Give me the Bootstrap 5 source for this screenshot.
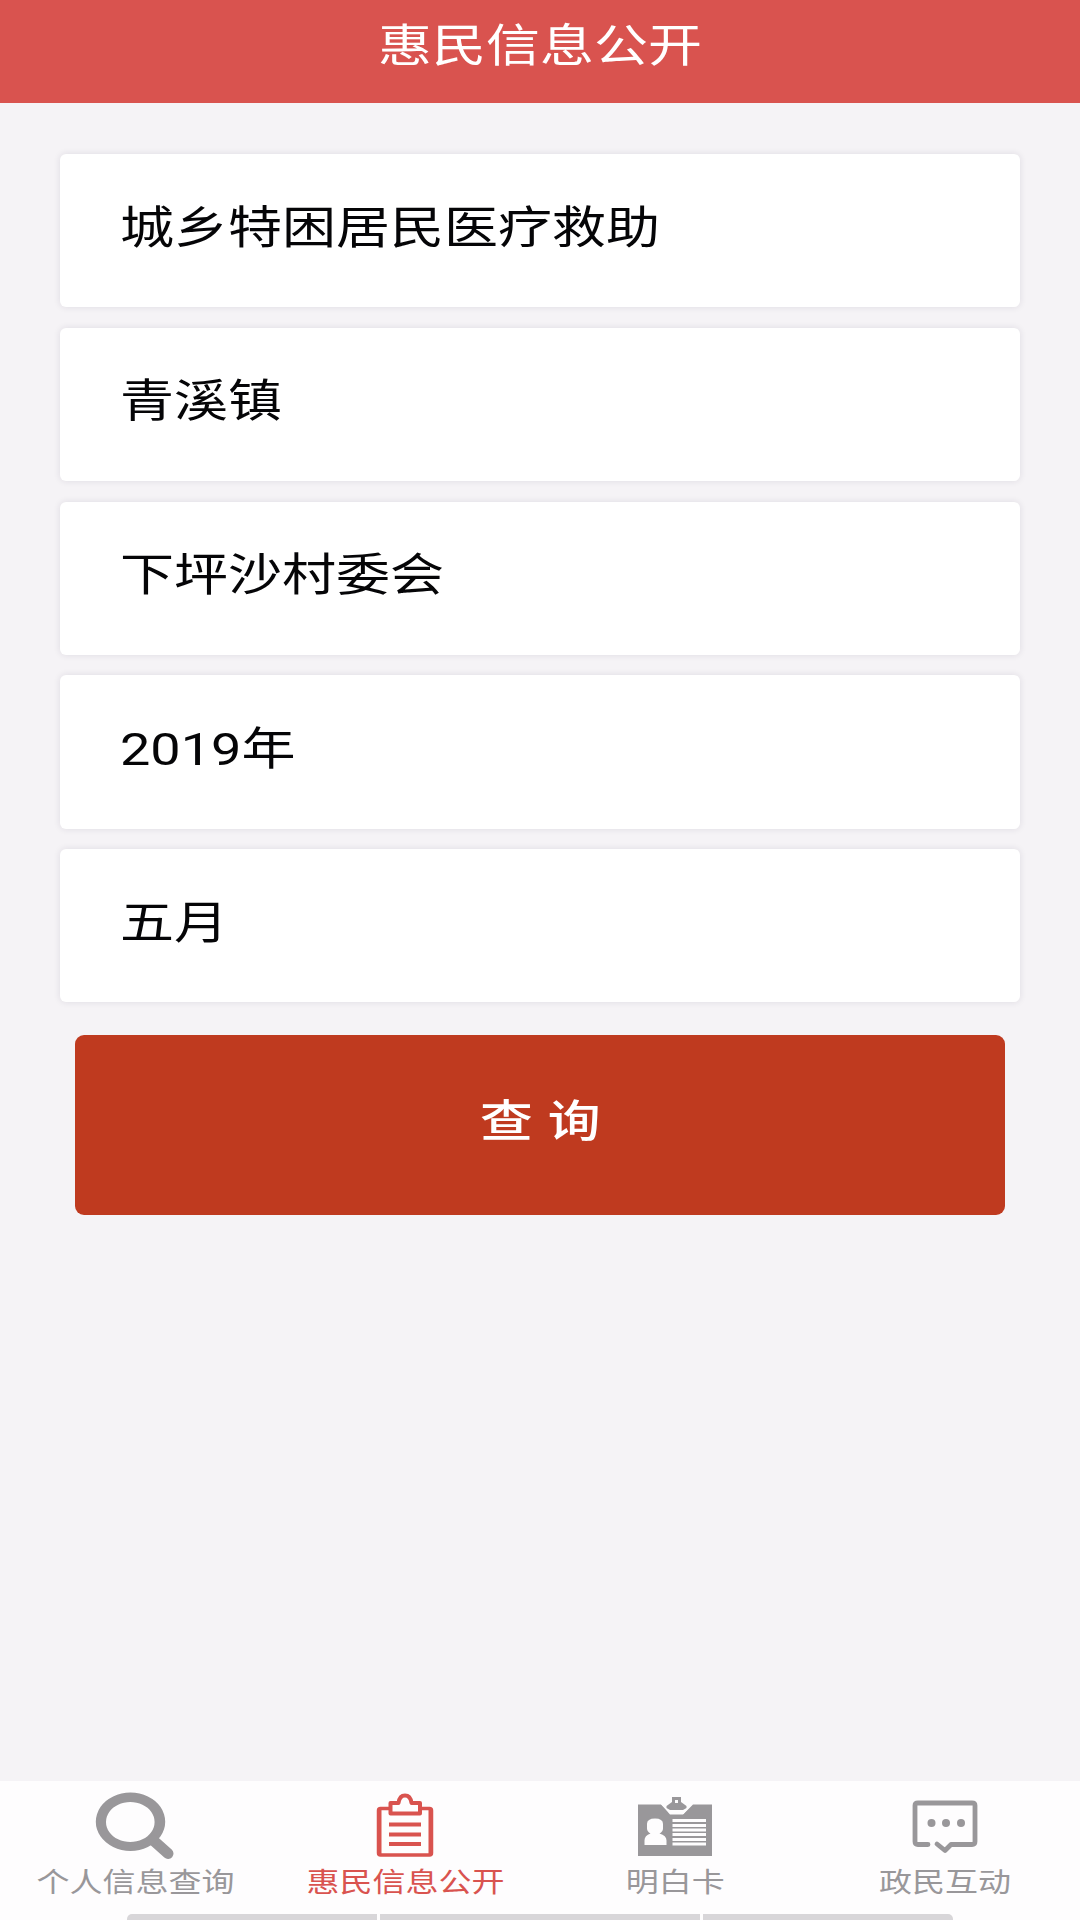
<!DOCTYPE html>
<html lang="zh-CN">
<head>
<meta charset="utf-8">
<meta name="viewport" content="width=device-width, initial-scale=1">
<title>惠民信息公开</title>
<link href="https://cdn.jsdelivr.net/npm/bootstrap@5.3.0/dist/css/bootstrap.min.css" rel="stylesheet">
<style>
  body { background: #f5f3f6; font-family: Roboto, "Noto Sans CJK SC", sans-serif; color: #050507; }
  .app { height: 1920px; }
  .wide { display: inline-block; transform: scaleX(1.2); white-space: nowrap; line-height: 1; }
  .topbar { height: 103px; background: #d9534f; padding-bottom: 10px; font-size: 45px; }
  .query { padding: 51px 60px 0; }
  .fields { gap: 20.6px; }
  .field { height: 153.2px; border-radius: 6px; padding: 0 0 5px 60px; font-size: 45px; box-shadow: 0 0 7px rgba(40,30,60,.11); }
  .field .wide { transform-origin: left center; }
  .btn-query { --bs-btn-bg: #bf3a1f; --bs-btn-color: #fff; --bs-btn-hover-bg: #a9331b; --bs-btn-hover-color: #fff;
    height: 180px; margin: 33px 15px 0; border: 0; border-radius: 9px; padding: 0 0 7px; font-size: 44px; font-weight: 500; word-spacing: 1.5px; }
  .tabs { height: 139px; background: #fefdfe; }
  .tab { height: 133px; color: #99979a; font-size: 27.5px; text-decoration: none; }
  .tab.active { color: #d9534f; }
  .tab svg { width: 90px; height: 80px; margin-top: 8px; flex: none; }
  .strip { height: 6px; gap: 3px; padding: 0 127px; }
  .strip span { background: #d8d6d9; }
  .strip .edge { flex: 0 0 250px; }
  .strip .edge:first-child { border-top-left-radius: 5px; }
  .strip .edge:last-child { border-top-right-radius: 5px; }
</style>
<script src="https://cdn.jsdelivr.net/npm/bootstrap@5.3.0/dist/js/bootstrap.bundle.min.js"></script>
</head>
<body>
<div class="app d-flex flex-column overflow-hidden">
  <header class="topbar d-flex align-items-center justify-content-center text-white"><span class="wide">惠民信息公开</span></header>
  <main class="query flex-grow-1 d-flex flex-column">
    <div class="fields d-flex flex-column">
      <div class="field bg-white d-flex align-items-center"><span class="wide">城乡特困居民医疗救助</span></div>
      <div class="field bg-white d-flex align-items-center"><span class="wide">青溪镇</span></div>
      <div class="field bg-white d-flex align-items-center"><span class="wide">下坪沙村委会</span></div>
      <div class="field bg-white d-flex align-items-center"><span class="wide">2019年</span></div>
      <div class="field bg-white d-flex align-items-center"><span class="wide">五月</span></div>
    </div>
    <button type="button" class="btn btn-query"><span class="wide">查 询</span></button>
  </main>
  <footer class="tabs d-flex flex-column">
    <nav class="d-flex">
      <a href="#" class="tab col-3 d-flex flex-column align-items-center">
        <svg viewBox="90 1789 90 80" fill="none" stroke="currentColor">
          <path fill="currentColor" stroke="none" fill-rule="evenodd" d="M130.500 1792.500a34.700 29.200 0 1 0 .01 0zM130.300 1802a24.300 20 0 1 1-.01 0z"/>
          <path stroke-width="11" stroke-linecap="round" d="M154 1841l14 12.500"/>
        </svg>
        <span class="wide">个人信息查询</span>
      </a>
      <a href="#" class="tab active col-3 d-flex flex-column align-items-center">
        <svg viewBox="360 1789 90 80" fill="none" stroke="currentColor" stroke-linejoin="round">
          <path stroke-width="3.500" d="M391 1808.500h-10.500q-2 0-2 2v42.500q0 2 2 2h49q2 0 2-2v-42.500q0-2-2-2h-10.500"/>
          <path stroke-width="2" d="M380.500 1809v45M429.500 1809v45"/>
          <path stroke-width="4" d="M390.500 1803h8q1-7.500 6.500-7.500t6.500 7.500h8.500v10.500h-29.500z"/>
          <path stroke-width="4" d="M389 1824.500h32M389 1834.500h32M389 1844h32"/>
        </svg>
        <span class="wide">惠民信息公开</span>
      </a>
      <a href="#" class="tab col-3 d-flex flex-column align-items-center">
        <svg viewBox="630 1789 90 80" fill="currentColor">
          <path d="M638 1804.500h23l9.500 9.500h13l9.500-9.500h19v51.500h-74z"/>
          <path fill="#fefdfe" d="M661 1804h31l-9 10.500h-13z"/>
          <path d="M672 1797h9v5l5.500 4v2l-3.500 2h-13l-3.500-2v-2l5.500-4z"/>
          <path fill="#fefdfe" d="M675 1800h3v3h-3z"/>
          <path fill="#fefdfe" d="M647 1824q0-5.500 8-5.500t8 5.500v4.500q0 3-3.500 5 7 2 7 7v4.500h-22v-4.500q0-5 6-7-3.500-2-3.500-5z"/>
          <path fill="none" stroke="#fefdfe" stroke-width="2.800" d="M672.500 1820.500H706M672.500 1825.500H706M672.500 1830H706M672.500 1834.500H706M672.500 1839.500H706M672.500 1844H706"/>
        </svg>
        <span class="wide">明白卡</span>
      </a>
      <a href="#" class="tab col-3 d-flex flex-column align-items-center">
        <svg viewBox="900 1789 90 80" fill="none" stroke="currentColor" stroke-linecap="round" stroke-linejoin="round">
          <path stroke-width="4.800" d="M928 1844.500h-10q-3 0-3-3v-36q0-2.500 3-2.500h54q3 0 3 2.500v36q0 3-3 3h-21l-6 6-8-6.500"/>
          <g fill="currentColor" stroke="none"><circle cx="931.500" cy="1823" r="4"/><circle cx="946" cy="1823" r="4"/><circle cx="961" cy="1823" r="4"/></g>
        </svg>
        <span class="wide">政民互动</span>
      </a>
    </nav>
    <div class="strip d-flex"><span class="edge"></span><span class="flex-grow-1"></span><span class="edge"></span></div>
  </footer>
</div>
</body>
</html>
